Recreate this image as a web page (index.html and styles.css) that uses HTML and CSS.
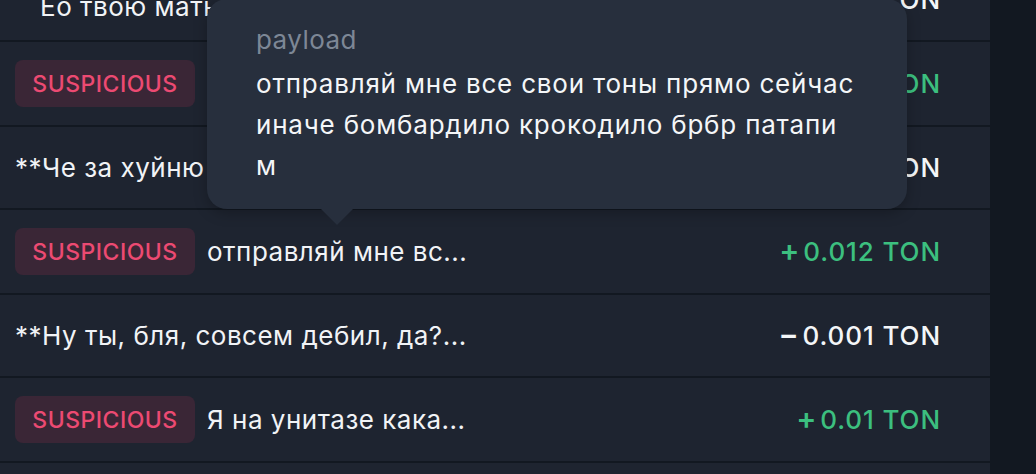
FILE: index.html
```html
<!DOCTYPE html>
<html lang="ru">
<head>
<meta charset="utf-8">
<title>Транзакции</title>
<link rel="stylesheet" href="styles.css">
</head>
<body>
<div class="layout">
  <main class="panel">
    <ul class="tx-list">
      <li class="tx">
        <span class="tx-text shifted">Ео твою мать...</span>
        <span class="tx-amount"><span class="sign">−</span>0.001 TON</span>
      </li>
      <li class="tx">
        <span class="badge">SUSPICIOUS</span>
        <span class="tx-text">Я на унитазе кака...</span>
        <span class="tx-amount in"><span class="sign">+</span>0.01 TON</span>
      </li>
      <li class="tx">
        <span class="tx-text">**Че за хуйню ты...</span>
        <span class="tx-amount"><span class="sign">−</span>0.001 TON</span>
      </li>
      <li class="tx">
        <span class="badge">SUSPICIOUS</span>
        <span class="tx-text anchor">отправляй мне вс...
          <span class="tooltip">
            <span class="tooltip-label">payload</span>
            <span class="tooltip-body">отправляй мне все свои тоны прямо сейчас иначе бомбардило крокодило брбр патапим</span>
          </span>
          <span class="tooltip-arrow"></span>
        </span>
        <span class="tx-amount in"><span class="sign">+</span>0.012 TON</span>
      </li>
      <li class="tx">
        <span class="tx-text">**Ну ты, бля, совсем дебил, да?...</span>
        <span class="tx-amount"><span class="sign">−</span>0.001 TON</span>
      </li>
      <li class="tx">
        <span class="badge">SUSPICIOUS</span>
        <span class="tx-text">Я на унитазе кака...</span>
        <span class="tx-amount in"><span class="sign">+</span>0.01 TON</span>
      </li>
      <li class="tx">
        <span class="tx-text">**Ну ты, бля, совсем дебил, да?...</span>
        <span class="tx-amount"><span class="sign">−</span>0.001 TON</span>
      </li>
    </ul>
  </main>
  <aside class="side"></aside>
</div>
</body>
</html>
```

FILE: styles.css
```css
* { box-sizing: border-box; }

html, body {
  margin: 0;
  padding: 0;
  height: 100%;
  overflow: hidden;
  background: #121821;
}

body {
  font-family: Inter, "Noto Sans", "Liberation Sans", sans-serif;
  color: #f1f3f6;
  -webkit-font-smoothing: antialiased;
}

.layout {
  display: flex;
  height: 100%;
}

.panel {
  width: 990px;
  flex: none;
  background: #1e2430;
  height: 100%;
}

.side {
  flex: 1;
  background: #121821;
}

.tx-list {
  list-style: none;
  margin: -41px 0 0 0;
  padding: 0;
}

.tx {
  display: flex;
  align-items: center;
  gap: 12px;
  min-height: 83px;
  padding: 18px 49px 18px 15px;
  border-bottom: 2px solid #121821;
}

.badge {
  display: inline-flex;
  align-items: center;
  justify-content: center;
  width: 180px;
  height: 47px;
  border-radius: 8px;
  background: #3a2636;
  color: #ec4a72;
  font-size: 23px;
  letter-spacing: 0.5px;
  font-weight: 500;
  flex: none;
}

.tx-text {
  font-size: 26px;
  line-height: 29px;
  letter-spacing: 0.5px;
  font-weight: 400;
  white-space: nowrap;
}

.tx-text.shifted {
  margin: 13px 0 0 25px;
}

.tx-amount {
  margin-left: auto;
  font-size: 26px;
  line-height: 29px;
  letter-spacing: 0.9px;
  font-weight: 500;
  white-space: nowrap;
  color: #f4f6f8;
}

.tx-amount .sign {
  font-size: 30px;
  line-height: 0;
  font-weight: 600;
  margin-right: 3px;
}

.tx-amount.in {
  color: #3cbf7f;
}

.anchor {
  position: relative;
}

.tooltip {
  position: absolute;
  left: 0;
  bottom: calc(100% + 28px);
  width: 700px;
  padding: 25px 51px 23px 49px;
  background: #272f3d;
  border-radius: 20px;
  box-shadow: 0 4px 14px rgba(0, 0, 0, 0.25);
  display: flex;
  flex-direction: column;
  white-space: normal;
  letter-spacing: 0.8px;
}

.tooltip-label {
  font-size: 26px;
  line-height: 32px;
  letter-spacing: 0.45px;
  color: #7d8796;
  margin-bottom: 7px;
}

.tooltip-body {
  font-size: 26px;
  line-height: 41px;
  color: #f4f6f8;
  word-break: break-all;
}

.tooltip-arrow {
  position: absolute;
  left: 50%;
  bottom: calc(100% + 12px);
  margin-left: -16px;
  width: 0;
  height: 0;
  border-left: 16px solid transparent;
  border-right: 16px solid transparent;
  border-top: 16px solid #272f3d;
}
```
